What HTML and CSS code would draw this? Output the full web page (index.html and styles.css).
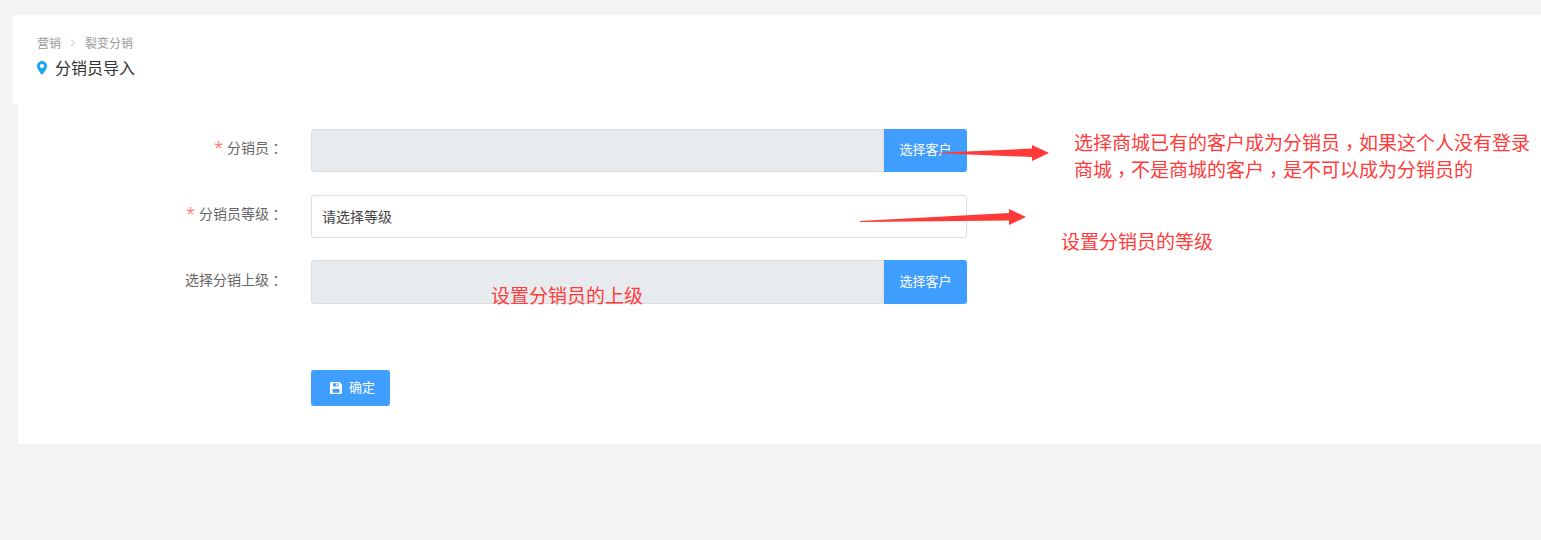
FILE: index.html
```html
<!DOCTYPE html>
<html lang="zh-CN">
<head>
  <meta charset="UTF-8">
  <meta name="viewport" content="width=device-width, initial-scale=1.0">
  <title>分销员导入</title>
  <link rel="stylesheet" href="styles.css">
</head>
<body>
  <div class="page">
    <div class="header">
      <div class="crumbs">
        <span>营销</span>
        <svg class="crumb-sep" width="6" height="8" viewBox="0 0 6 8"><path d="M1 .5 4.500 4 1 7.500" fill="none" stroke="#bbb"/></svg>
        <span>裂变分销</span>
      </div>
      <div class="title">
        <svg class="pin" width="10" height="14" viewBox="0 0 10 14"><path fill-rule="evenodd" d="M5 0a5 5 0 0 1 5 5c0 3-3 6.500-5 9-2-2.500-5-6-5-9a5 5 0 0 1 5-5Zm0 3a2 2 0 1 0 0 4.200A2 2 0 0 0 5 3Z" fill="#1aa5f5"/></svg>
        <span>分销员导入</span>
      </div>
    </div>

    <div class="card">
      <div class="row">
        <label class="label"><i>*</i>分销员<span class="punct" lang="zh-TW">：</span></label>
        <div class="field disabled"></div>
        <button class="btn-pick">选择客户</button>
      </div>
      <div class="row">
        <label class="label"><i>*</i>分销员等级<span class="punct" lang="zh-TW">：</span></label>
        <div class="field">请选择等级</div>
      </div>
      <div class="row row-tall">
        <label class="label">选择分销上级<span class="punct" lang="zh-TW">：</span></label>
        <div class="field disabled"></div>
        <button class="btn-pick">选择客户</button>
      </div>
      <div class="actions">
        <button class="btn-save">
          <svg width="12" height="12" viewBox="0 0 12 12"><path fill-rule="evenodd" d="M1 0h8.500L12 2.500V11a1 1 0 0 1-1 1H1a1 1 0 0 1-1-1V1a1 1 0 0 1 1-1Zm2 1.200v3.300h5.500V1.200ZM6 1.800h1.500v2H6ZM2.500 7v3.800h7V7Z" fill="#fff"/></svg>
          确定
        </button>
      </div>
    </div>

    <!-- annotations drawn on top of the screenshot -->
    <svg class="arrow arrow-one" width="116" height="17" viewBox="0 0 116 17"><path d="M0 8 99 3.500V0l17 8-17 8v-4Z" fill="#ff3838"/></svg>
    <svg class="arrow arrow-two" width="166" height="17" viewBox="0 0 166 17"><path d="M0 12 149 4V0l17 8-17 8v-4.500L0 13Z" fill="#ff3838"/></svg>
    <p class="note note-one">选择商城已有的客户成为分销员<span class="punct" lang="zh-TW">，</span>如果这个人没有登录<br>商城<span class="punct" lang="zh-TW">，</span>不是商城的客户<span class="punct" lang="zh-TW">，</span>是不可以成为分销员的</p>
    <p class="note note-two">设置分销员的等级</p>
    <p class="note note-three">设置分销员的上级</p>
  </div>
</body>
</html>
```

FILE: styles.css
```css
html, body {
  margin: 0;
  height: 100%;
  overflow: hidden;
}
body {
  background-color: #f4f4f4;
  font-family: "Open Sans", "Noto Sans CJK SC", sans-serif;
  color: #333;
}
.punct {
  display: inline-block;
  font-family: "Noto Sans CJK TC", sans-serif;
  transform: translateY(1px);
}
.page {
  position: relative;
  height: 540px;
  padding-top: 15px;
  box-sizing: border-box;
}
.header {
  margin-left: 13px;
  height: 90px;
  padding: 20px 0 0 24px;
  box-sizing: border-box;
  background-color: #fff;
}
.crumbs {
  display: flex;
  align-items: center;
  height: 16px;
  font-size: 12px;
  color: #999;
}
.crumb-sep {
  margin: 0 9px;
}
.title {
  display: flex;
  align-items: center;
  gap: 8px;
  margin-top: 5px;
  height: 22px;
  font-size: 16px;
  color: #333;
}
.pin {
  margin-top: 2px;
}
.card {
  margin-left: 18px;
  height: 340px;
  padding-top: 24px;
  box-sizing: border-box;
  background-color: #fff;
  border-bottom: 1px solid #eee;
}
.row {
  display: flex;
  width: 949px;
  height: 43px;
  margin-bottom: 22px;
}
.row:first-child {
  margin-bottom: 23px;
}
.row-tall {
  height: 44px;
}
.label {
  width: 265px;
  margin-right: 28px;
  flex-shrink: 0;
  padding-top: 8px;
  text-align: right;
  font-size: 14px;
  line-height: 20px;
  color: #666;
}
.row-tall .label {
  padding-top: 9px;
}
.label i {
  font-style: normal;
  color: #ff7a6e;
  font-size: 16px;
  margin-right: 4px;
}
.field {
  flex: 1;
  box-sizing: border-box;
  padding: 0 10px;
  border: 1px solid #ddd;
  border-radius: 3px;
  background-color: #fff;
  font-size: 14px;
  line-height: 41px;
  color: #444;
}
.field.disabled {
  background-color: #e8ebee;
  border-radius: 3px 0 0 3px;
}
.btn-pick {
  width: 83px;
  padding: 0 0 4px;
  border: none;
  border-radius: 0 3px 3px 0;
  background-color: #409eff;
  color: #fff;
  font-family: inherit;
  font-size: 13px;
}
.actions {
  padding: 44px 0 0 293px;
}
.btn-save {
  display: flex;
  align-items: center;
  justify-content: center;
  gap: 7px;
  width: 79px;
  height: 36px;
  padding: 0 0 3px 4px;
  border: none;
  border-radius: 3px;
  background-color: #409eff;
  color: #fff;
  font-family: inherit;
  font-size: 13px;
}
.btn-save svg {
  margin-top: 3px;
}
.arrow {
  position: absolute;
}
.arrow-one {
  left: 933px;
  top: 145px;
}
.arrow-two {
  left: 860px;
  top: 209px;
}
.note {
  position: absolute;
  margin: 0;
  font-family: "Noto Sans CJK SC", sans-serif;
  font-size: 19px;
  line-height: 27px;
  color: #ff3b3b;
  white-space: nowrap;
}
.note .punct {
  line-height: 1;
  transform: translateY(5px);
}
.note-one {
  left: 1074px;
  top: 128px;
}
.note-two {
  left: 1061px;
  top: 227px;
}
.note-three {
  left: 491px;
  top: 281px;
}
```
